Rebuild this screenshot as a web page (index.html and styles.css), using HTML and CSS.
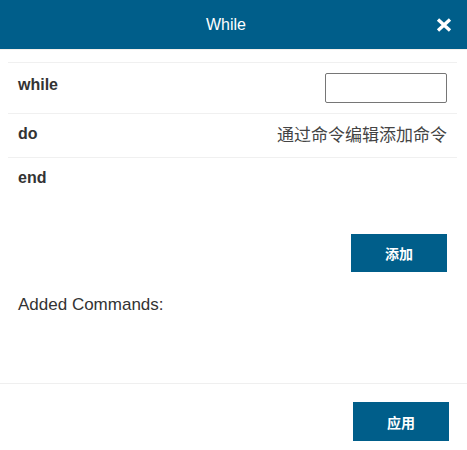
FILE: index.html
```html
<!DOCTYPE html>
<html lang="zh">
<head>
<meta charset="utf-8">
<title>While</title>
<link rel="stylesheet" href="styles.css">
</head>
<body>
<div class="dialog">
  <header class="dlg-header">
    <div class="dlg-title">While</div>
    <button class="dlg-close" aria-label="close">
      <svg width="16" height="14" viewBox="0 0 16 14"><path d="M2 1.5 L14 12.5 M14 1.5 L2 12.5" stroke="#fff" stroke-width="3.3" fill="none"/></svg>
    </button>
  </header>
  <div class="dlg-body">
    <div class="cmd-table">
      <div class="cmd-row row-input">
        <span class="cmd-label">while</span>
        <input class="cmd-input" type="text">
      </div>
      <div class="cmd-row row-text">
        <span class="cmd-label">do</span>
        <span class="cmd-hint">通过命令编辑添加命令</span>
      </div>
      <div class="cmd-row row-text">
        <span class="cmd-label">end</span>
      </div>
    </div>
    <div class="add-actions">
      <button class="btn-primary">添加</button>
    </div>
    <div class="added-title">Added Commands:</div>
    <div class="added-list"></div>
  </div>
  <footer class="dlg-footer">
    <button class="btn-primary btn-apply">应用</button>
  </footer>
</div>
</body>
</html>
```
FILE: styles.css
```css
html, body {
  margin: 0;
  padding: 0;
  background: #fff;
}
body {
  font-family: "Liberation Sans", Arial, "Noto Sans CJK SC", sans-serif;
  color: #333;
}
.dialog {
  width: 467px;
  height: 450px;
  overflow: hidden;
  display: flex;
  flex-direction: column;
}
.dlg-header {
  height: 49px;
  background: #005e8a;
  display: flex;
  align-items: center;
  padding: 0 15px 0 16px;
  border-bottom: 1px solid #f3f1ec;
}
.dlg-title {
  flex: 1;
  text-align: center;
  color: #fff;
  font-size: 16px;
  padding-top: 1px;
}
.dlg-close {
  width: 16px;
  height: 14px;
  padding: 0;
  margin: 0;
  border: 0;
  background: none;
  display: flex;
  margin-top: 1px;
}
.dlg-body {
  flex: 1;
}
.cmd-table {
  margin: 12px 10px 0 8px;
}
.cmd-row {
  display: flex;
  justify-content: space-between;
  align-items: flex-start;
  border-top: 1px solid #f0f0f0;
  padding: 10px 10px 10px 10px;
}
.row-text {
  padding: 8px 10px 12px 10px;
}
.cmd-label {
  font-weight: bold;
  font-size: 16px;
  line-height: 23px;
  color: #333;
}
.cmd-input {
  box-sizing: border-box;
  width: 122px;
  height: 30px;
  margin: 0;
  border: 1px solid #767676;
  border-radius: 2px;
  background: #fff;
}
.cmd-hint {
  font-size: 17px;
  line-height: 23px;
  color: #444;
  font-family: "Noto Sans CJK SC", sans-serif;
}
.add-actions {
  display: flex;
  justify-content: flex-end;
  padding: 33px 20px 0 0;
}
.btn-primary {
  width: 96px;
  height: 38px;
  border: 0;
  margin: 0;
  background: #005e8a;
  color: #fff;
  font-weight: bold;
  font-size: 14px;
  font-family: "Noto Sans CJK SC", sans-serif;
}
.added-title {
  padding: 24px 0 0 18px;
  font-size: 17px;
  line-height: 18px;
  color: #333;
}
.added-list {
  height: 0;
}
.dlg-footer {
  border-top: 1px solid #efefef;
  display: flex;
  justify-content: flex-end;
  padding: 18px 18px 0 0;
  height: 48px;
}
.btn-apply {
  height: 39px;
}
```
